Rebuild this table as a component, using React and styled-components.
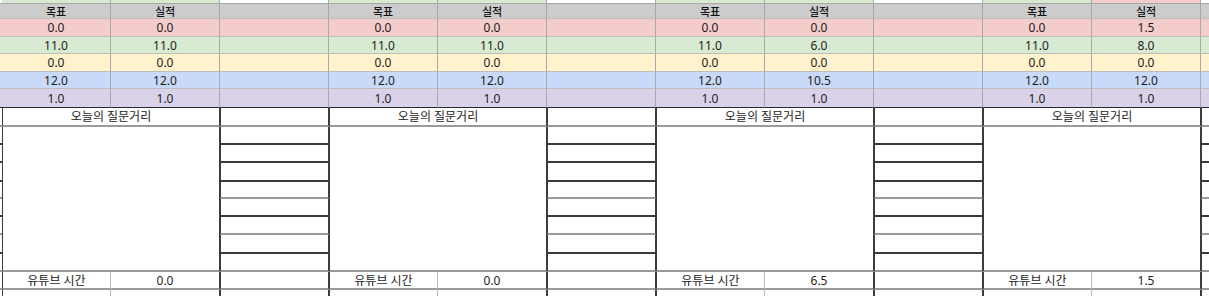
import React from 'react';
import styled, { createGlobalStyle } from 'styled-components';

const GlobalStyle = createGlobalStyle`
  html, body {
    margin: 0;
    padding: 0;
    background: #fff;
  }
  body {
    font-family: "Noto Sans", "Noto Sans CJK KR", sans-serif;
  }
`;

const LINE = {
  grid: '1px solid #a8a8a8',
  soft: '1px solid #bdbdbd',
  hard: '1px solid #2a2a2a',
  frame: '1px solid #3c3c3c',
  mid: '2px solid #9a9a9a',
  dark: '2px solid #3a3a3a',
};

const ROW_COLORS = ['#f4cccc', '#d9ead3', '#fff2cc', '#c9daf8', '#d9d2e9'];

const GROUPS = [
  {
    values: [['0.0', '0.0'], ['11.0', '11.0'], ['0.0', '0.0'], ['12.0', '12.0'], ['1.0', '1.0']],
    youtube: '0.0',
    topRight: '#d9ead3',
  },
  {
    values: [['0.0', '0.0'], ['11.0', '11.0'], ['0.0', '0.0'], ['12.0', '12.0'], ['1.0', '1.0']],
    youtube: '0.0',
    topRight: '#d9ead3',
  },
  {
    values: [['0.0', '0.0'], ['11.0', '6.0'], ['0.0', '0.0'], ['12.0', '10.5'], ['1.0', '1.0']],
    youtube: '6.5',
    topRight: '#d9ead3',
  },
  {
    values: [['0.0', '1.5'], ['11.0', '8.0'], ['0.0', '0.0'], ['12.0', '12.0'], ['1.0', '1.0']],
    youtube: '1.5',
    topRight: '#f4cccc',
  },
];

// bottom lines of the spare column, rows 8..17
const SPARE_LINES = ['mid', 'dark', 'dark', 'dark', 'mid', 'dark', 'mid', 'dark', 'mid', 'mid'];

const Sheet = styled.div`
  display: grid;
  width: 1209px;
  height: 296px;
  overflow: hidden;
  grid-template-columns: 2px repeat(12, 109px);
  grid-template-rows: 4px 15px 18px 17px 18px 17px 19px 19px 18px 18px 19px 17px 18px 18px 19px 18px 18px 6px;
  font-size: 12px;
  color: #1d1d1d;
`;

const Cell = styled.div`
  grid-column: ${p => p.$col} / span ${p => p.$span || 1};
  grid-row: ${p => p.$row} / span ${p => p.$rows || 1};
  box-sizing: border-box;
  display: flex;
  align-items: center;
  justify-content: center;
  overflow: hidden;
  white-space: nowrap;
  line-height: 1;
  background: ${p => p.$bg || '#fff'};
  border-left: ${p => p.$left || 'none'};
  border-right: ${p => p.$right || 'none'};
  border-bottom: ${p => p.$bottom || 'none'};
`;

const HeaderCell = styled(Cell)`
  background: #cccccc;
  font-size: 11px;
  font-weight: 500;
  color: #111;
`;

const ValueCell = styled(Cell)`
  padding-top: 1px;
`;

const TitleCell = styled(Cell)`
  padding-top: 1px;
`;

const NoteBox = styled(Cell)`
  background: #fff;
`;

const SpareCell = styled(Cell)`
  background: #fff;
`;

const colKind = c => (c === 1 ? 'C' : ['A', 'B', 'C'][(c - 2) % 3]);
const colGroup = c => Math.floor((c - 2) / 3);

const TopBand = () => {
  const cells = [];
  for (let c = 1; c <= 13; c++) {
    const kind = colKind(c);
    const g = GROUPS[colGroup(c)];
    const right = c === 1 ? 'none' : LINE.grid;

    let topBg = '#fff';
    if (kind === 'A' && g) topBg = '#d9ead3';
    if (kind === 'B' && g) topBg = g.topRight;
    cells.push(<Cell key={`t-${c}`} $col={c} $row={1} $bg={topBg} $right={right} $bottom={LINE.grid} />);

    cells.push(
      <HeaderCell key={`h-${c}`} $col={c} $row={2} $right={right} $bottom={LINE.soft}>
        {kind === 'A' && g ? '목표' : kind === 'B' && g ? '실적' : ''}
      </HeaderCell>
    );

    ROW_COLORS.forEach((bg, i) => {
      let text = '';
      if (g && kind === 'A') text = g.values[i][0];
      if (g && kind === 'B') text = g.values[i][1];
      cells.push(
        <ValueCell
          key={`v-${c}-${i}`}
          $col={c}
          $row={3 + i}
          $bg={bg}
          $right={right}
          $bottom={i === ROW_COLORS.length - 1 ? LINE.hard : LINE.soft}
        >
          {text}
        </ValueCell>
      );
    });
  }
  return cells;
};

const QuestionBlock = ({ group, index }) => {
  const a = 2 + index * 3;
  const b = a + 1;
  return (
    <>
      <TitleCell $col={a} $span={2} $row={8} $left={LINE.frame} $right={LINE.frame} $bottom={LINE.mid}>
        오늘의 질문거리
      </TitleCell>
      <NoteBox $col={a} $span={2} $row={9} $rows={8} $left={LINE.frame} $right={LINE.frame} $bottom={LINE.mid} />
      <ValueCell $col={a} $row={17} $left={LINE.frame} $right={LINE.soft} $bottom={LINE.mid}>
        유튜브 시간
      </ValueCell>
      <ValueCell $col={b} $row={17} $right={LINE.frame} $bottom={LINE.mid}>
        {group.youtube}
      </ValueCell>
      <Cell $col={a} $row={18} $left={LINE.frame} $right={LINE.soft} />
      <Cell $col={b} $row={18} $right={LINE.frame} />
    </>
  );
};

const SpareColumn = ({ col }) => {
  const side = col === 1 ? 'none' : LINE.frame;
  return (
    <>
      {SPARE_LINES.map((kind, i) => (
        <SpareCell key={i} $col={col} $row={8 + i} $left={side} $right={side} $bottom={LINE[kind]} />
      ))}
      <SpareCell $col={col} $row={18} $left={side} $right={side} />
    </>
  );
};

const App = () => (
  <>
    <GlobalStyle />
    <Sheet>
      <TopBand />
      <SpareColumn col={1} />
      {GROUPS.map((group, i) => (
        <React.Fragment key={i}>
          <QuestionBlock group={group} index={i} />
          <SpareColumn col={4 + i * 3} />
        </React.Fragment>
      ))}
    </Sheet>
  </>
);

export default App;
